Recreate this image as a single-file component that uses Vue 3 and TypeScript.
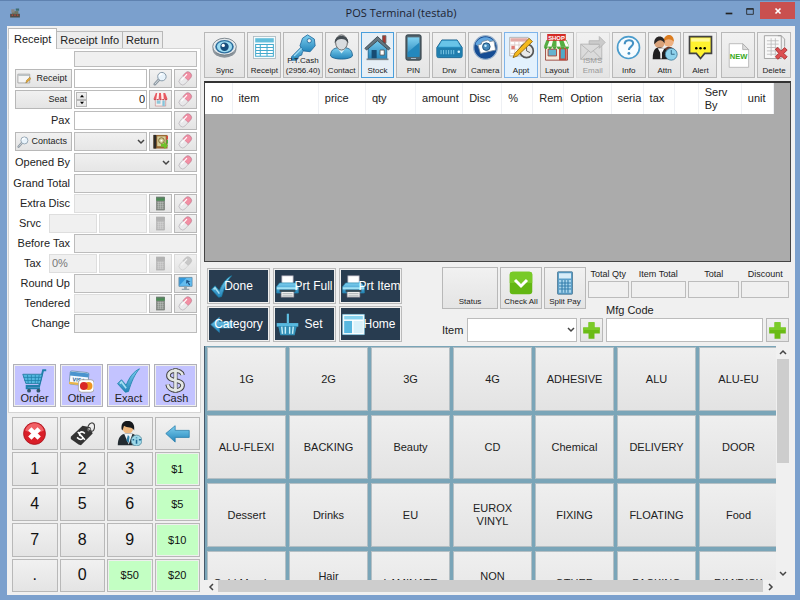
<script setup lang="ts">
import { ref } from 'vue'

interface Tool { label: string[]; icon: string; state?: string; wide?: number; disabled?: boolean }
interface Column { title: string; width: number }

const icons: Record<string, string> = {
  eye: '<ellipse cx="16" cy="18" rx="14" ry="10" fill="#8b949b"/><ellipse cx="16" cy="15" rx="14" ry="10" fill="#e3e8eb" stroke="#6f7a82"/><ellipse cx="16" cy="15" rx="11" ry="8" fill="#2d6f9e"/><ellipse cx="16" cy="15" rx="9" ry="6.500" fill="#9edcf2"/><circle cx="16" cy="15" r="5" fill="#174d7c"/><circle cx="14.500" cy="13.500" r="2" fill="#fff"/>',
  sheet: '<rect x="3" y="3" width="26" height="26" fill="#f5fbfd" stroke="#a9bac1"/><rect x="5" y="5" width="22" height="5" fill="#62bedb"/><path d="M5.500 12.500h21v14h-21zM5.500 16h21M5.500 19.500h21M5.500 23h21M11 12v15M19 12v15" fill="#fff" stroke="#43aacd" stroke-width="1.200"/>',
  key: '<path d="M17 13 3 27v4h6l3-5 3-1 1-4 5-4z" fill="url(#blue)" stroke="#226a9c"/><path d="m16 5 6-4 8 5 1 8-6 7-8-1-4-6z" fill="url(#blue)" stroke="#226a9c"/><circle cx="24" cy="8" r="2.500" fill="#f0f0f0" stroke="#226a9c"/><path d="m15 17-9 9" stroke="#9fdcf5" stroke-width="1.500"/>',
  person: '<path d="M3 26c0-8 5-10 13-10s13 2 13 10c-3 5-23 5-26 0z" fill="url(#blue)" stroke="#20628e"/><path d="m11 17 5 6 5-6" fill="#d6eef8"/><ellipse cx="16" cy="10" rx="7" ry="9" fill="#d9dcdf" stroke="#555"/><path d="M8 11C7-1 25-1 24 11c-2-4-5-5-8-5s-6 1-8 5z" fill="#444c52"/>',
  house: '<path d="M22 2h4v9h-4z" fill="#a9382f" stroke="#666"/><path d="M5 16 16 6l11 10v14H5z" fill="url(#blue)" stroke="#1c618d"/><path d="M1 17 16 3l15 14-2 2L16 8 3 19z" fill="#63757f" stroke="#39444c"/><path d="M9 19h6v10H9z" fill="#174b72"/><path d="M19 19h5v6h-5z" fill="#fff" stroke="#555"/><path d="M3 30h26" stroke="#7d878d" stroke-width="2"/>',
  phone: '<rect x="7" y="1" width="18" height="30" rx="2" fill="#52656f" stroke="#27333a"/><rect x="9" y="4" width="14" height="23" fill="url(#blue)"/><path d="m9 22 14-12v17H9z" fill="#2388bd"/><path d="M13 29h6" stroke="#bcd"/>',
  drawer: '<path d="m7 7-6 9v10q0 2 2 2h26q2 0 2-2V16l-6-9z" fill="#2d98cb" stroke="#165f8b"/><path d="M1 16h30v9q0 2-2 2H3q-2 0-2-2z" fill="#207eae"/><path d="m7 8-4 7h26l-4-7z" fill="#69c4e8"/><path d="M6 19v5m3-5v5m3-5v5m3-5v5m3-5v5m3-5v5" stroke="#91d8f1"/><circle cx="27" cy="21" r="1.500" fill="#d8f5ff"/>',
  camera: '<circle cx="16" cy="16" r="14" fill="#164d94" stroke="#9bb3cc" stroke-width="1.500"/><path d="M4 12C8 1 24 1 28 12c-6 5-16 7-24 0z" fill="#61a5df"/><path d="m7 13 4-1 1-3 7-2 2 2 5-1 2 11-18 4z" fill="#fff" stroke="#77899b"/><circle cx="17" cy="15" r="4.500" fill="#4789bb" stroke="#174872"/><circle cx="16" cy="14" r="1.500" fill="#c7f0ff"/>',
  agenda: '<path d="M2 4h22v22H2z" fill="#fff" stroke="#aaa"/><path d="M3 5h20v4H3z" fill="#e3aaa5"/><path d="M3 13h20M3 18h20M3 23h20M8 9v16M13 9v16M18 9v16" stroke="#dccac7"/><path d="M4 14h4v4H4z" fill="#df7d75"/><circle cx="22" cy="20" r="8" fill="#e8e8e8" stroke="#555" stroke-width="2"/><path d="M22 15v5l4 2" fill="none" stroke="#444"/><path d="m25 5 4 4L11 26l-5 2 2-5z" fill="#f5b91d" stroke="#8e6510"/>',
  shop: '<path d="M3 14h26v17H3z" fill="#f5e9db" stroke="#923a32"/><path d="M6 18h10v8H6z" fill="#65b3cf" stroke="#a23e30"/><path d="M20 17h7v13h-7z" fill="#50a9c7" stroke="#c4493c" stroke-width="2"/><path d="m4 7-3 8h30l-3-8z" fill="#55ae42"/><path d="m8 7-3 8h5l2-8m4 0v8h5l-2-8m5 0 3 8h4l-4-8" fill="#f9fff5"/><path d="M1 15q2 6 5 0 2 6 5 0 3 6 5 0 3 6 5 0 2 6 5 0 3 6 5 0" fill="#4ba63c"/><rect x="5" y="0" width="22" height="8" fill="#d42b27"/><text x="16" y="7" text-anchor="middle" font-size="7" font-weight="bold" fill="#fff" font-family="Liberation Sans,sans-serif">SHOP</text>',
  mail: '<path d="M2 12h25v18H2z" fill="#ccc" stroke="#777"/><path d="m2 12 12 10 13-10M2 30l9-10m6 0 10 10" fill="none" stroke="#777"/><path d="M12 8h12V3l7 7-7 7v-5H12z" fill="#aaa" stroke="#777"/>',
  info: '<circle cx="16" cy="16" r="13" fill="#f7fcff" stroke="#4b9ccc" stroke-width="2"/><path d="M11.500 12c0-6 10-6 10-1 0 4-5 4-5 8" fill="none" stroke="#4391c4" stroke-width="2.500"/><circle cx="16.500" cy="23" r="1.700" fill="#4391c4"/>',
  waiters: '<circle cx="21" cy="9" r="6" fill="#eeb182"/><path d="M15 9c0-11 13-10 12 0-4-3-7-4-12 0z" fill="#dc7d20"/><path d="M14 24c0-12 15-12 16 1z" fill="#6b3928"/><circle cx="10" cy="11" r="6" fill="#d9a27a"/><path d="M4 12C2 0 18 0 16 11c-3-5-7-5-12 1z" fill="#282525"/><path d="M2 30c0-13 4-14 9-14s10 3 10 14z" fill="#201f20"/><path d="m8 17 4 7 4-7z" fill="#fff"/><path d="M12 19v10" stroke="#eee" stroke-width="2"/><circle cx="24" cy="24" r="7" fill="#8ed2ec" stroke="#407a99"/><path d="M24 19v5h4" fill="none" stroke="#245878"/>',
  alert: '<path d="M3 3h26v20h-8l-5 6-5-6H3z" fill="#fff22f" stroke="#424242" stroke-width="2"/><path d="M5 5h22v4H5z" fill="#fff997"/><circle cx="11" cy="17" r="1.500"/><circle cx="16" cy="17" r="1.500"/><circle cx="21" cy="17" r="1.500"/>',
  fresh: '<path d="M5 2h16l7 7v21H5z" fill="#fff" stroke="#b3b3b3"/><path d="M21 2v7h7z" fill="#ddd" stroke="#aaa"/><text x="16" y="20" text-anchor="middle" font-size="9" font-weight="bold" fill="#38a91c" font-family="Liberation Sans,sans-serif">NEW</text>',
  remove: '<path d="M4 2h20v27H4z" fill="#f8f8f8" stroke="#999"/><path d="M7 8h14M7 12h14M7 16h14M7 20h14M7 24h14M12 5v21M17 5v21" stroke="#bbb"/><path d="M20 2h4l4 4v9" fill="none" stroke="#999"/><path d="m17 18 3-2 4 4 4-4 3 3-4 4 4 4-3 3-4-4-4 4-3-3 4-4z" fill="#dc4f50" stroke="#a6282a"/>',
  pill: '<g transform="rotate(42 16 16)"><rect x="8" y="0" width="15" height="32" rx="7" fill="#e9e9eb" stroke="#a19ba2"/><path d="M8 15V8c0-10 15-10 15 0v7z" fill="#f28fa4" stroke="#ca6681"/><path d="M12 7v18" stroke="#fff" stroke-width="2.500"/></g>',
  lens: '<path d="m13 18-9 10" stroke="#8d98a2" stroke-width="6" stroke-linecap="round"/><path d="m13 18-9 10" stroke="#d9dfe3" stroke-width="2"/><circle cx="19" cy="12" r="9" fill="#e8f3fb" stroke="#8295a5" stroke-width="2"/><path d="M13 11q2-5 7-5" fill="none" stroke="#fff" stroke-width="3"/>',
  note: '<path d="M2 5h27v20H2z" fill="#f5f5f5" stroke="#a1a1a1" stroke-width="2"/><path d="M3 6h25v3H3z" fill="#b7bfc3"/><path d="m20 25 2-6 7-7 3 3-8 8z" fill="#e6a933" stroke="#8c6d27"/>',
  store: '<path d="M5 14h22v16H5z" fill="#f3eded" stroke="#b76969"/><path d="M8 18h8v7H8z" fill="#8fc9db"/><path d="M20 18h5v12h-5z" fill="#86c4da"/><path d="M6 2h20l5 13H1z" fill="#e75a61"/><path d="m9 2-2 13h5l1-13m4 0 1 13h5L22 2" fill="#fff0f0"/><path d="M1 15q3 5 6 0 3 5 6 0 3 5 6 0 3 5 6 0 3 5 6 0" fill="#cd4750"/>',
  book: '<rect x="1" y="2" width="30" height="29" fill="#9a6a35"/><path d="M1 2h6v29H1z" fill="#2b2a28"/><path d="M29 4h3v7h-3z" fill="#d44"/><path d="M29 13h3v7h-3z" fill="#4b4"/><path d="M9 5h18v21H9z" fill="#d8cf9a"/><circle cx="18" cy="14" r="6" fill="none" stroke="#806b35" stroke-width="2"/><circle cx="18" cy="14" r="2" fill="#fff"/><path d="M17 21h6v-5l9 9-7 7-2-5h-6z" fill="#6dc22b"/>',
  calc: '<rect x="7" y="2" width="18" height="28" fill="#858b85" stroke="#717771"/><rect x="7" y="3" width="18" height="7" fill="#488c52"/><path d="M7 4h18" stroke="#6a7770" stroke-width="2"/><path d="M9 14h14M9 18h14M9 22h14M9 26h14M12 12v16M16 12v16M20 12v16" stroke="#c5c9c5"/>',
  monitor: '<path d="M2 3h28v19H2z" fill="#3298dc" stroke="#7094ab" stroke-width="2"/><path d="m3 20 15-16h11v17H3z" fill="#65bdee"/><path d="M13 22h6v5h5v3H8v-3h5z" fill="#94a5ae"/><path d="m18 8 9 4-5 1 4 5-2 2-4-6-3 3z" fill="#1c5386"/>',
  cart: '<path d="M31 3h-4l-5 20H6v3h17" fill="none" stroke="#207fab" stroke-width="2.500"/><path d="M1 8h25l-3 12H5z" fill="#54b7df" stroke="#1c7299"/><path d="m7 9 1 11m4-11v11m5-11v11m5-11-2 11M2 12h23M3 16h21" stroke="#1f80ab"/><circle cx="9" cy="29" r="2.500" fill="#31566c"/><circle cx="21" cy="29" r="2.500" fill="#31566c"/>',
  cards: '<g transform="rotate(6 15 12)"><rect x="1" y="5" width="24" height="17" rx="2" fill="#f7fbff" stroke="#6a8ca7"/><path d="M1 6h24v5H1z" fill="#4b94ce"/><path d="M1 19h24v3H1z" fill="#e9b549"/><text x="13" y="18" text-anchor="middle" font-size="7" font-weight="bold" fill="#205b92" font-family="Liberation Sans,sans-serif">VISA</text></g><rect x="12" y="15" width="20" height="16" rx="4" fill="#fff" stroke="#999"/><circle cx="25" cy="23" r="5" fill="#ee9420"/><circle cx="19" cy="23" r="5" fill="#d92626"/>',
  check: '<path d="m2 20 5-5 6 7C17 12 22 5 30 1 24 8 20 17 16 30l-4 1z" fill="url(#blue)" stroke="#1782a7"/><path d="m5 20 2-2 6 8" fill="none" stroke="#a7e0f0" stroke-width="2"/>',
  dollar: '<path d="M25 9c-1-7-18-8-18 1 0 8 18 4 18 12 0 9-18 9-19-1" fill="none" stroke="#444" stroke-width="6"/><path d="M16 0v32" stroke="#444" stroke-width="5"/><path d="M25 9c-1-7-18-8-18 1 0 8 18 4 18 12 0 9-18 9-19-1M16 1v30" fill="none" stroke="#e3e6e4" stroke-width="3.500"/>',
  cancel: '<circle cx="16" cy="16" r="14" fill="#d91f28" stroke="#a51019"/><path d="M4 12C8 0 24 0 28 12c-7 4-16 4-24 0z" fill="#f16166"/><path d="m10 10 12 12m0-12L10 22" stroke="#fff" stroke-width="6"/>',
  tag: '<path d="m1 20 15-14 10 2 3 8-15 15-3-1L1 23z" fill="#333"/><circle cx="24" cy="11" r="2" fill="#eee"/><path d="M23 13c-2-13 11-14 8-3-1 4-5 5-7 1" fill="none" stroke="#444" stroke-width="1.500"/><path d="M19 16c-5-5-10 1-5 3s1 8-5 2m1-7 9 10" fill="none" stroke="#fff" stroke-width="2"/>',
  agent: '<circle cx="14" cy="9" r="7" fill="#efb87e"/><path d="M6 11C3-4 22-3 22 8v4C20 7 13 9 9 6L7 12z" fill="#16191c"/><path d="M1 31c0-10 4-14 10-15h8c5 1 9 6 9 15z" fill="#232b31"/><path d="m9 16 6 14 5-14z" fill="#eef4f7"/><path d="m14 18 2 2-1 8-3-3z" fill="#307fa6"/><circle cx="25" cy="25" r="7" fill="#9ed8e8" stroke="#558698"/><path d="M25 21v1m0 2v5m-5-5h2m6 0h3" stroke="#216b95" stroke-width="2"/>',
  arrow: '<path d="M1 16 13 6v6h18v9H13v6z" fill="url(#blue)" stroke="#287eac"/>',
  printer: '<path d="M8 1h16v14H8z" fill="#fff" stroke="#889"/><path d="M5 11h22l4 5v9H1v-9z" fill="url(#blue)" stroke="#2786ad"/><path d="M1 17h30v3H1z" fill="#a3e2f5"/><path d="M7 22h18v9H7z" fill="#eee" stroke="#667"/><path d="M5 22h22" stroke="#344955" stroke-width="3"/><path d="M9 26h14m-14 3h14" stroke="#92999c"/>',
  basket: '<path d="M15 1h3v13h-3z" fill="#5fc0e4"/><path d="M1 14h30v5H1z" fill="#57b9df"/><path d="m3 18 3 13h20l3-13z" fill="#328fb7"/><path d="m8 19 1 10m4-10v10m6-10v10m5-10-1 10" stroke="#c5eef8" stroke-width="2"/>',
  panes: '<path d="M1 2h30v28H1z" fill="#fff" stroke="#8ad1eb"/><path d="M3 4h26v5H3z" fill="#87d3ef"/><path d="M3 11h11v17H3z" fill="#58b7df"/><path d="M16 11h13v17H16z" fill="#d9f1fa"/>',
  accept: '<rect x="1" y="1" width="30" height="30" rx="4" fill="#63b713"/><path d="M1 16V5q0-4 4-4h22q4 0 4 4v11z" fill="#78ca27"/><path d="m8 12 8 8 8-8" fill="none" stroke="#fff" stroke-width="4"/>',
  abacus: '<rect x="6" y="1" width="20" height="30" rx="1" fill="#5b9fc9" stroke="#44718d"/><path d="M8 3h16v7H8z" fill="#d8edf8"/><path d="M8 12h16v17H8z" fill="#a9d5ec"/><path d="M8 16h16M8 20h16M8 24h16M12 12v17M16 12v17M20 12v17" stroke="#347eac" stroke-width="1.500"/>',
  plus: '<path d="M11 2h10v9h9v10h-9v9H11v-9H2V11h9z" fill="#6abb15"/><path d="M11 2h10v9h9v4H2v-4h9z" fill="#7bcb28"/>',
  register: '<path d="M3 18h26v10H3z" fill="#4d4c48"/><path d="M8 11h17v8H8z" fill="#6a7465"/><path d="M18 4h9v6h-9z" fill="#3e6d72"/><path d="M6 6h9v9H6z" fill="#888"/><path d="M7 20h4v3H7zm7 0h4v3h-4zm7 0h4v3h-4z" fill="#c04f3d"/>'
}

const tools: Tool[] = [
  { label: ['Sync'], icon: 'eye', wide: 42 },
  { label: ['Receipt'], icon: 'sheet' },
  { label: ['P.T.Cash', '(2956.40)'], icon: 'key', wide: 40 },
  { label: ['Contact'], icon: 'person' },
  { label: ['Stock'], icon: 'house', state: 'focused' },
  { label: ['PIN'], icon: 'phone' },
  { label: ['Drw'], icon: 'drawer' },
  { label: ['Camera'], icon: 'camera' },
  { label: ['Appt'], icon: 'agenda', state: 'hot' },
  { label: ['Layout'], icon: 'shop' },
  { label: ['iSMS', 'Email'], icon: 'mail', disabled: true },
  { label: ['Info'], icon: 'info' },
  { label: ['Attn'], icon: 'waiters' },
  { label: ['Alert'], icon: 'alert' },
  { label: [], icon: 'fresh', state: 'apart' },
  { label: ['Delete'], icon: 'remove' }
]

const columns: Column[] = [
  { title: 'no', width: 27 }, { title: 'item', width: 86 }, { title: 'price', width: 47 },
  { title: 'qty', width: 50 }, { title: 'amount', width: 47 }, { title: 'Disc', width: 39 },
  { title: '%', width: 31 }, { title: 'Rema', width: 31 }, { title: 'Option', width: 47 },
  { title: 'seria', width: 32 }, { title: 'tax', width: 31 }, { title: '', width: 24 },
  { title: 'Serv By', width: 43 }, { title: 'unit', width: 32 }
]
const columnTotal = columns.reduce((sum, c) => sum + c.width, 0)

const payments = [
  { label: 'Order', icon: 'cart' }, { label: 'Other', icon: 'cards' },
  { label: 'Exact', icon: 'check' }, { label: 'Cash', icon: 'dollar' }
]
const padIcons = [
  { label: 'Cancel', icon: 'cancel' }, { label: 'Price tag', icon: 'tag' },
  { label: 'Customer', icon: 'agent' }, { label: 'Back', icon: 'arrow' }
]
const padKeys = ['1', '2', '3', '$1', '4', '5', '6', '$5', '7', '8', '9', '$10', '.', '0', '$50', '$20']
const actions = [
  { label: 'Done', icon: 'check' }, { label: 'Prt Full', icon: 'printer', shifted: true },
  { label: 'Prt Item', icon: 'printer', shifted: true }, { label: 'Category', icon: 'arrow' },
  { label: 'Set', icon: 'basket', shifted: true }, { label: 'Home', icon: 'panes', shifted: true }
]
const totals = [
  { label: 'Total Qty', width: 41 }, { label: 'Item Total', width: 56 },
  { label: 'Total', width: 52 }, { label: 'Discount', width: 48 }
]
const categories = [
  '1G', '2G', '3G', '4G', 'ADHESIVE', 'ALU', 'ALU-EU',
  'ALU-FLEXI', 'BACKING', 'Beauty', 'CD', 'Chemical', 'DELIVERY', 'DOOR',
  'Dessert', 'Drinks', 'EU', 'EUROX\nVINYL', 'FIXING', 'FLOATING', 'Food',
  'Gold Member', 'Hair\nCare', 'LAMINATE', 'NON\nSLIP', 'OTHER', 'PACKING', 'RIM/DISK'
]

const seat = ref(0)
</script>

<template>
  <div class="window">
    <svg class="defs" aria-hidden="true">
      <defs>
        <linearGradient id="blue" x1="0" y1="0" x2="0" y2="1">
          <stop offset="0" stop-color="#7fd0f0" />
          <stop offset="1" stop-color="#2384ba" />
        </linearGradient>
      </defs>
    </svg>

    <header class="titlebar">
      <svg class="app-icon" viewBox="0 0 32 32" v-html="icons.register" />
      <h1>POS Terminal (testab)</h1>
      <div class="window-buttons">
        <button aria-label="Minimize"><svg viewBox="0 0 12 12"><path d="M2 9h8" stroke="#222" stroke-width="2" /></svg></button>
        <button aria-label="Maximize"><svg viewBox="0 0 12 12"><path d="M2 3h8v7H2zM2 4h8" fill="none" stroke="#222" /></svg></button>
        <button class="close" aria-label="Close"><svg viewBox="0 0 12 12"><path d="m3 3 6 6m0-6L3 9" stroke="#fff" stroke-width="2" /></svg></button>
      </div>
    </header>

    <main class="client">
      <aside class="sidebar">
        <nav class="tabs">
          <button class="active">Receipt</button>
          <button>Receipt Info</button>
          <button>Return</button>
        </nav>

        <form class="page" @submit.prevent>
          <div class="rows">
            <div class="row short"><span class="name" /><input class="field" readonly aria-label="Summary" /></div>
            <div class="row">
              <button class="name-button"><svg viewBox="0 0 32 32" v-html="icons.note" />Receipt</button>
              <input class="field edit" aria-label="Receipt number" />
              <button class="mini" aria-label="Find receipt"><svg viewBox="0 0 32 32" v-html="icons.lens" /></button>
              <button class="mini" aria-label="Clear receipt"><svg viewBox="0 0 32 32" v-html="icons.pill" /></button>
            </div>
            <div class="row">
              <button class="name-button">Seat</button>
              <span class="spin field edit">
                <span class="steps">
                  <button aria-label="More seats" @click="seat++"><svg viewBox="0 0 8 6"><path d="m4 1 3 4H1z" /></svg></button>
                  <button aria-label="Fewer seats" @click="seat--"><svg viewBox="0 0 8 6"><path d="m4 5 3-4H1z" /></svg></button>
                </span>
                <input v-model="seat" inputmode="numeric" aria-label="Seat number" />
              </span>
              <button class="mini" aria-label="Seat map"><svg viewBox="0 0 32 32" v-html="icons.store" /></button>
              <button class="mini" aria-label="Clear seat"><svg viewBox="0 0 32 32" v-html="icons.pill" /></button>
            </div>
            <div class="row">
              <label class="name" for="pax">Pax</label>
              <input id="pax" class="field edit" />
              <button class="mini" aria-label="Clear pax"><svg viewBox="0 0 32 32" v-html="icons.pill" /></button>
            </div>
            <div class="row">
              <button class="name-button"><svg viewBox="0 0 32 32" v-html="icons.lens" />Contacts</button>
              <span class="combo"><select class="field" aria-label="Contact"><option></option></select><svg viewBox="0 0 8 8"><path d="m1 2 3 3 3-3" /></svg></span>
              <button class="mini" aria-label="Address book"><svg viewBox="0 0 32 32" v-html="icons.book" /></button>
              <button class="mini" aria-label="Clear contact"><svg viewBox="0 0 32 32" v-html="icons.pill" /></button>
            </div>
            <div class="row">
              <label class="name" for="opened">Opened By</label>
              <span class="combo"><select id="opened" class="field"><option></option></select><svg viewBox="0 0 8 8"><path d="m1 2 3 3 3-3" /></svg></span>
              <button class="mini" aria-label="Clear opened by"><svg viewBox="0 0 32 32" v-html="icons.pill" /></button>
            </div>
          </div>

          <div class="rows dense">
            <div class="row"><label class="name" for="grand">Grand Total</label><input id="grand" class="field" readonly /></div>
            <div class="row">
              <label class="name" for="extra">Extra Disc</label>
              <input id="extra" class="field faint" readonly />
              <button class="mini" aria-label="Calculate discount"><svg viewBox="0 0 32 32" v-html="icons.calc" /></button>
              <button class="mini" aria-label="Clear discount"><svg viewBox="0 0 32 32" v-html="icons.pill" /></button>
            </div>
            <div class="row">
              <label class="name narrow" for="srvc">Srvc</label>
              <input id="srvc" class="field faint" readonly />
              <input class="field faint" readonly aria-label="Service amount" />
              <button class="mini" disabled aria-label="Calculate service"><svg viewBox="0 0 32 32" v-html="icons.calc" /></button>
              <button class="mini" aria-label="Clear service"><svg viewBox="0 0 32 32" v-html="icons.pill" /></button>
            </div>
            <div class="row"><label class="name" for="before">Before Tax</label><input id="before" class="field" readonly /></div>
            <div class="row">
              <label class="name narrow" for="tax">Tax</label>
              <input id="tax" class="field faint" value="0%" disabled />
              <input class="field faint" readonly aria-label="Tax amount" />
              <button class="mini" disabled aria-label="Calculate tax"><svg viewBox="0 0 32 32" v-html="icons.calc" /></button>
              <button class="mini" disabled aria-label="Clear tax"><svg viewBox="0 0 32 32" v-html="icons.pill" /></button>
            </div>
            <div class="row">
              <label class="name" for="round">Round Up</label>
              <input id="round" class="field" readonly />
              <button class="mini" aria-label="Show on display"><svg viewBox="0 0 32 32" v-html="icons.monitor" /></button>
            </div>
            <div class="row">
              <label class="name" for="tendered">Tendered</label>
              <input id="tendered" class="field faint" readonly />
              <button class="mini" aria-label="Calculate tendered"><svg viewBox="0 0 32 32" v-html="icons.calc" /></button>
              <button class="mini" aria-label="Clear tendered"><svg viewBox="0 0 32 32" v-html="icons.pill" /></button>
            </div>
            <div class="row"><label class="name" for="change">Change</label><input id="change" class="field" readonly /></div>
          </div>

          <div class="payments">
            <button v-for="p in payments" :key="p.label">
              <svg viewBox="0 0 32 32" v-html="icons[p.icon]" />
              <span>{{ p.label }}</span>
            </button>
          </div>
        </form>

        <section class="keypad">
          <button v-for="k in padIcons" :key="k.label" :aria-label="k.label"><svg viewBox="0 0 32 32" v-html="icons[k.icon]" /></button>
          <button v-for="k in padKeys" :key="k" :class="{ money: k.startsWith('$') }">{{ k }}</button>
        </section>
      </aside>

      <section class="workspace">
        <div class="toolbar">
          <button
            v-for="t in tools"
            :key="t.icon"
            :class="t.state"
            :style="{ flexGrow: t.wide ?? 34 }"
            :disabled="t.disabled"
            :aria-label="t.label.join(' ') || 'New'"
          >
            <svg viewBox="0 0 32 32" v-html="icons[t.icon]" />
            <span><template v-for="(line, i) in t.label" :key="line"><br v-if="i">{{ line }}</template></span>
          </button>
        </div>

        <div class="sale">
          <table>
            <colgroup>
              <col v-for="(c, i) in columns" :key="i" :style="{ width: (c.width / columnTotal) * 100 + '%' }">
            </colgroup>
            <thead>
              <tr><th v-for="(c, i) in columns" :key="i" :class="{ wrap: c.title === 'Serv By' }">{{ c.title }}</th></tr>
            </thead>
          </table>
        </div>

        <div class="controls">
          <div class="actions">
            <button v-for="a in actions" :key="a.label" :class="{ shifted: a.shifted }">
              <svg viewBox="0 0 32 32" v-html="icons[a.icon]" />
              <span>{{ a.label }}</span>
            </button>
          </div>

          <div class="entry">
            <div class="summary">
              <button class="tall status"><span>Status</span></button>
              <button class="tall"><svg viewBox="0 0 32 32" v-html="icons.accept" /><span>Check All</span></button>
              <button class="tall"><svg viewBox="0 0 32 32" v-html="icons.abacus" /><span>Split Pay</span></button>
              <div class="figures">
                <div class="totals">
                  <label v-for="t in totals" :key="t.label" :style="{ flexGrow: t.width }">
                    {{ t.label }}<input class="field" readonly>
                  </label>
                </div>
                <label class="mfg" for="mfg">Mfg Code</label>
              </div>
            </div>
            <div class="lookup">
              <label for="item">Item</label>
              <span class="combo"><select id="item" class="field edit"><option></option></select><svg viewBox="0 0 8 8"><path d="m1 2 3 3 3-3" /></svg></span>
              <button class="add" aria-label="Add item"><svg viewBox="0 0 32 32" v-html="icons.plus" /></button>
              <input id="mfg" class="field edit">
              <button class="add" aria-label="Add code"><svg viewBox="0 0 32 32" v-html="icons.plus" /></button>
            </div>
          </div>
        </div>

        <div class="catalog">
          <div class="tiles-view">
            <div class="tiles">
              <button v-for="c in categories" :key="c">{{ c }}</button>
            </div>
          </div>
          <div class="bar vertical">
            <button aria-label="Scroll up"><svg viewBox="0 0 8 8"><path d="m1 5 3-3 3 3" /></svg></button>
            <div class="track"><div class="thumb" /></div>
            <button aria-label="Scroll down"><svg viewBox="0 0 8 8"><path d="m1 2 3 3 3-3" /></svg></button>
          </div>
          <div class="bar horizontal">
            <button aria-label="Scroll left"><svg viewBox="0 0 8 8"><path d="M5 1 2 4l3 3" /></svg></button>
            <div class="track"><div class="thumb" /></div>
            <button aria-label="Scroll right"><svg viewBox="0 0 8 8"><path d="m3 1 3 3-3 3" /></svg></button>
          </div>
        </div>
      </section>
    </main>
  </div>
</template>

<style>
body { margin: 0; }
</style>

<style scoped>
.window {
  display: flex;
  flex-direction: column;
  box-sizing: border-box;
  min-height: 100vh;
  padding: 1px 5px 5px 7px;
  background: #7ba0cd;
  border-top: 1px solid #5f82b0;
  font: 11px/13px "Liberation Sans", Arial, sans-serif;
  color: #222;
}
.window * { box-sizing: border-box; }
.defs { position: absolute; width: 0; height: 0; }
button, input, select { font: inherit; color: inherit; margin: 0; padding: 0; border-radius: 0; min-width: 0; }
button {
  border: 1px solid #b8b8b8;
  background: linear-gradient(#f1f1f1, #e4e4e4);
}
svg { display: block; }

.titlebar { display: grid; grid-template-columns: 1fr auto 1fr; height: 24px; }
.app-icon { width: 12px; height: 12px; margin: 5px 0 0 2px; }
h1 { margin: 3px 0 0; font: 11px/16px "Open Sans", "Noto Sans", sans-serif; color: #1b2330; }
.window-buttons { display: flex; justify-content: flex-end; height: 17px; }
.window-buttons button { display: grid; place-items: center; width: 21px; border: 0; background: none; }
.window-buttons svg { width: 10px; height: 10px; }
.window-buttons .close { width: 35px; background: #c9504f; }

.client { display: flex; flex: 1; gap: 3px; padding: 2px 4px 2px 1px; background: #f0f0f0; }
.sidebar { display: flex; flex-direction: column; flex: 0 0 193px; }
.tabs { display: flex; align-items: flex-end; height: 20px; }
.tabs button { height: 17px; padding: 0 3px; border-bottom: 0; border-left: 0; background: #ededed; white-space: nowrap; }
.tabs .active { z-index: 1; height: 21px; margin-bottom: -1px; padding: 0 5px; border-left: 1px solid #c6c6c6; background: #fff; }

.page {
  display: flex;
  flex-direction: column;
  flex: 1;
  padding: 2px 3px 5px 4px;
  border: 1px solid #d4d4d4;
  background: #fff;
}
.rows { display: flex; flex-direction: column; gap: 2px; padding-left: 2px; }
.rows.dense { gap: 1px; padding-top: 2px; }
.row { display: flex; gap: 2px; height: 19px; }
.row.short { height: 16px; }
.name, .name-button { flex: 0 0 57px; min-width: 0; }
.name { display: flex; align-items: center; justify-content: flex-end; padding-right: 2px; white-space: nowrap; }
.name.narrow { flex-basis: 32px; padding-right: 6px; }
.name-button { display: flex; align-items: center; justify-content: flex-end; gap: 2px; padding-right: 4px; font-size: 9px; }
.name-button svg { width: 14px; height: 14px; margin-right: auto; margin-left: 1px; }
.field {
  flex: 1 1 0;
  width: 100%;
  min-width: 0;
  padding: 0 2px;
  border: 1px solid #bcbcbc;
  background: #f0f0f0;
  appearance: none;
}
.field.edit { background: #fff; }
.field.faint { border-color: #dedede; }
.field:disabled { color: #777; }
.mini { display: grid; place-items: center; flex: 0 0 23px; }
.mini svg { width: 15px; height: 15px; }
button:disabled { border-color: #dadada; color: #999; }
button:disabled svg { filter: grayscale(1); opacity: 0.5; }
.spin { display: flex; align-items: center; padding: 1px; }
.spin input { flex: 1; width: 0; border: 0; background: none; text-align: right; }
.steps { display: flex; flex-direction: column; width: 11px; height: 15px; }
.steps button { display: grid; place-items: center; flex: 1; }
.steps svg { width: 6px; height: 4px; }
.combo { position: relative; display: flex; flex: 1 1 0; min-width: 0; }
.combo .field { background: linear-gradient(#f0f0f0, #e6e6e6); }
.combo .field.edit { background: #fff; }
.combo svg { position: absolute; right: 2px; top: calc(50% - 4px); width: 8px; height: 8px; pointer-events: none; }
.combo path, .bar path { fill: none; stroke: #444; stroke-width: 1.5; }

.payments { display: grid; grid-template-columns: repeat(4, 1fr); gap: 4px; margin-top: auto; }
.payments button {
  display: grid;
  height: 43px;
  justify-items: center;
  border: 1px solid #b0b0b8;
  background: #c3c3ff;
  box-shadow: inset 0 0 0 1px #eee;
}
.payments svg, .payments span { grid-area: 1 / 1; }
.payments svg { width: 25px; height: 25px; margin-top: 3px; }
.payments span { z-index: 1; align-self: end; padding-bottom: 1px; }

.keypad {
  display: grid;
  grid-template-columns: repeat(4, 1fr);
  grid-auto-rows: 1fr;
  gap: 2px;
  height: 180px;
  padding: 4px 1px 1px 4px;
}
.keypad button { display: grid; place-items: center; font-size: 16px; line-height: 18px; color: #111; }
.keypad svg { width: 25px; height: 25px; }
.keypad .money { background: #c3ffc3; font-size: 11px; box-shadow: inset 0 0 0 1px #eee; }

.workspace { display: flex; flex-direction: column; flex: 1; min-width: 0; }
.toolbar { display: flex; gap: 2px; height: 46px; margin: 4px 0 3px; }
.toolbar button { display: grid; flex: 1 1 0; justify-items: center; }
.toolbar svg, .toolbar span { grid-area: 1 / 1; }
.toolbar svg { width: 27px; height: 27px; margin-top: 1px; }
.toolbar span { z-index: 1; align-self: end; padding-bottom: 1px; font-size: 8px; line-height: 10px; white-space: nowrap; }
.toolbar .focused { border-color: #4a9fdc; background: #e6eff6; }
.toolbar .hot { border-color: #7eb4ea; background: #e3f1fd; }
.toolbar .apart { margin-left: 2px; }
.toolbar .apart svg { align-self: center; margin: 0; }

.sale { height: 181px; border: 1px solid #444; border-top: 2px solid #333; background: #ababab; }
table { width: calc(100% - 16px); height: 31px; border-collapse: collapse; table-layout: fixed; background: #fff; }
th {
  padding: 0 0 0 6px;
  border-right: 1px solid #eef0f4;
  font-weight: normal;
  text-align: left;
  white-space: nowrap;
  overflow: hidden;
}
.wrap { white-space: normal; padding-right: 12px; }

.controls { display: flex; justify-content: space-between; padding: 5px 2px 4px 3px; }
.actions { display: grid; grid-template-columns: repeat(3, 63px); grid-auto-rows: 36px; gap: 2px 3px; padding-top: 1px; }
.actions button {
  display: grid;
  align-items: center;
  border: 1px solid #bbb;
  background: #283c50;
  box-shadow: inset 0 0 0 1px #f0f0f0;
  color: #fff;
  font-size: 12px;
}
.actions svg, .actions span { grid-area: 1 / 1; }
.actions svg { width: 23px; height: 23px; margin-left: 2px; }
.actions span { z-index: 1; justify-self: center; white-space: nowrap; }
.actions .shifted span { padding-left: 18px; }

.entry { display: flex; flex-direction: column; justify-content: space-between; width: 347px; }
.summary { display: flex; gap: 2px; height: 50px; }
.tall { display: grid; flex: 0 0 42px; justify-items: center; height: 42px; font-size: 8px; line-height: 10px; }
.tall svg, .tall span { grid-area: 1 / 1; }
.tall svg { width: 24px; height: 24px; margin-top: 3px; }
.tall span { align-self: end; padding-bottom: 1px; white-space: nowrap; }
.tall.status { flex-basis: 56px; }
.figures { display: flex; flex-direction: column; flex: 1; justify-content: space-between; }
.totals { display: flex; gap: 2px; }
.totals label { display: flex; flex-direction: column; flex: 1 1 0; min-width: 0; font-size: 9px; line-height: 14px; text-align: center; white-space: nowrap; }
.totals .field { flex: 0 0 17px; }
.mfg { padding-left: 18px; }
.lookup { display: flex; gap: 3px; height: 24px; }
.lookup label { align-self: center; flex: 0 0 22px; }
.lookup .combo { flex: 0 0 110px; }
.add { display: grid; place-items: center; flex: 0 0 23px; }
.add svg { width: 19px; height: 19px; }

.catalog {
  display: grid;
  flex: 1 1 0;
  grid-template-columns: minmax(0, 1fr) 15px;
  grid-template-rows: minmax(0, 1fr) 13px;
  min-height: 200px;
}
.tiles-view { overflow: hidden; border-left: 1px solid #46596a; background: #7aa5b8; }
.tiles {
  display: grid;
  grid-template-columns: repeat(7, minmax(0, 1fr));
  grid-auto-rows: 64px;
  gap: 4px 3px;
  margin-right: -2px;
  padding: 1px 0 0 2px;
}
.tiles button { border-color: #b4bfc4; background: linear-gradient(#efefef, #e3e3e3); white-space: pre-line; }
.bar { display: flex; background: #f0f0f0; }
.bar button { display: grid; place-items: center; flex: 0 0 13px; border: 0; background: none; }
.bar svg { width: 8px; height: 8px; }
.track { flex: 1; }
.thumb { background: #cdcdcd; }
.vertical { flex-direction: column; padding-right: 2px; }
.vertical .thumb { height: 50%; margin-left: 1px; }
.horizontal { padding-left: 1px; }
.horizontal .thumb { height: 12px; }
</style>
